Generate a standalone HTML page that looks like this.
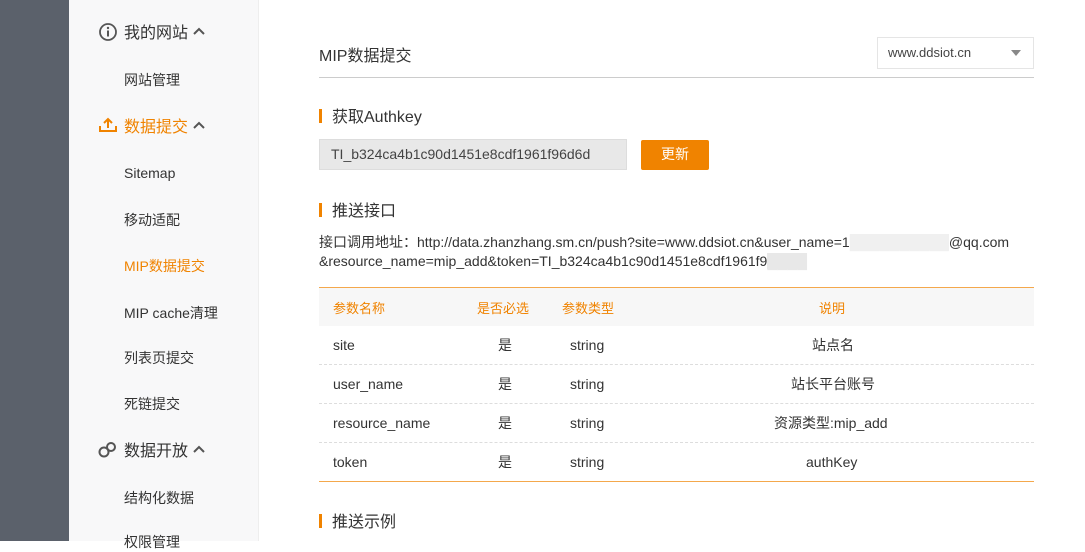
<!DOCTYPE html>
<html><head><meta charset="utf-8"><style>
*{margin:0;padding:0;box-sizing:border-box}
body{width:1085px;height:541px;overflow:hidden;background:#fff;font-family:"Liberation Sans","Noto Sans CJK SC",sans-serif;color:#333;position:relative}
.dark{position:absolute;left:0;top:0;width:69px;height:541px;background:#5b616b}
.side{position:absolute;left:69px;top:0;width:190px;height:541px;background:#f8f8f9;border-right:1px solid #eee}
.t{position:absolute;white-space:nowrap}
.s{font-size:14px;color:#333;left:124px}
.g{font-size:16px;color:#333}
.o{color:#f08300}
.abs{position:absolute}
.bar{position:absolute;left:319px;width:3px;height:14px;background:#f08300}
</style></head><body>
<div class="dark"></div>
<div class="side"></div>
<svg class="abs" style="left:98px;top:22px" width="20" height="20" viewBox="0 0 20 20"><circle cx="10" cy="10" r="8" fill="none" stroke="#555" stroke-width="1.8"/><circle cx="10" cy="6" r="1.2" fill="#555"/><rect x="9" y="8.5" width="2" height="6" fill="#555"/></svg>
<div class="t g" style="left:124px;top:19px">我的网站</div>
<svg class="abs" style="left:192px;top:26px" width="14" height="10"><path d="M2 8 L7 3 L12 8" fill="none" stroke="#555" stroke-width="2"/></svg>
<div class="t s" style="top:70px">网站管理</div>
<svg class="abs" style="left:99px;top:117px" width="18" height="16"><path d="M9 11V2 M5 6L9 2L13 6" fill="none" stroke="#f08300" stroke-width="2"/><path d="M1 9V14H17V9" fill="none" stroke="#f08300" stroke-width="2"/></svg>
<div class="t g o" style="left:124px;top:113px">数据提交</div>
<svg class="abs" style="left:192px;top:120px" width="14" height="10"><path d="M2 8 L7 3 L12 8" fill="none" stroke="#555" stroke-width="2"/></svg>
<div class="t s" style="top:165px">Sitemap</div>
<div class="t s" style="top:210px">移动适配</div>
<div class="t s o" style="top:256px;color:#f08300">MIP数据提交</div>
<div class="t s" style="top:303px">MIP cache清理</div>
<div class="t s" style="top:348px">列表页提交</div>
<div class="t s" style="top:394px">死链提交</div>
<svg class="abs" style="left:98px;top:441px" width="20" height="18"><circle cx="6" cy="11" r="4.5" fill="none" stroke="#555" stroke-width="2"/><circle cx="13" cy="6" r="4" fill="none" stroke="#555" stroke-width="2"/></svg>
<div class="t g" style="left:124px;top:437px">数据开放</div>
<svg class="abs" style="left:192px;top:444px" width="14" height="10"><path d="M2 8 L7 3 L12 8" fill="none" stroke="#555" stroke-width="2"/></svg>
<div class="t s" style="top:488px">结构化数据</div>
<div class="t s" style="top:532px">权限管理</div>

<div class="t" style="left:319px;top:42px;font-size:16px;color:#333">MIP数据提交</div>
<div class="abs" style="left:877px;top:37px;width:157px;height:32px;border:1px solid #e5e5e5;background:#fff"></div>
<div class="t" style="left:888px;top:45px;font-size:13px;color:#444">www.ddsiot.cn</div>
<svg class="abs" style="left:1010px;top:49px" width="12" height="8"><path d="M1 1H11L6 7Z" fill="#888"/></svg>
<div class="abs" style="left:319px;top:77px;width:715px;height:1px;background:#ccc"></div>

<div class="bar" style="top:109px"></div>
<div class="t" style="left:332px;top:103px;font-size:16px">获取Authkey</div>
<div class="abs" style="left:319px;top:139px;width:308px;height:31px;background:#e8e8e8;border:1px solid #ddd"></div>
<div class="t" style="left:331px;top:146px;font-size:14px;color:#444">TI_b324ca4b1c90d1451e8cdf1961f96d6d</div>
<div class="abs" style="left:641px;top:140px;width:68px;height:30px;background:#f08300;border-radius:2px;color:#fff;font-size:14px;text-align:center;line-height:28px">更新</div>

<div class="bar" style="top:203px"></div>
<div class="t" style="left:332px;top:197px;font-size:16px">推送接口</div>
<div class="t" style="left:319px;top:232px;font-size:14px">接口调用地址：http://data.zhanzhang.sm.cn/push?site=www.ddsiot.cn&amp;user_name=1<span style="color:#f0f0f0;background:#f0f0f0">██████████</span>@qq.com</div>
<div class="t" style="left:319px;top:253px;font-size:14px">&amp;resource_name=mip_add&amp;token=TI_b324ca4b1c90d1451e8cdf1961f9<span style="color:#e8e8e8;background:#e8e8e8">████</span></div>

<div class="abs" style="left:319px;top:287px;width:715px;height:1px;background:#f08300;opacity:.7"></div>
<div class="abs" style="left:319px;top:288px;width:715px;height:38px;background:#f7f7f7"></div>
<div class="t o" style="left:333px;top:298px;font-size:13px">参数名称</div>
<div class="t o" style="left:477px;top:298px;font-size:13px">是否必选</div>
<div class="t o" style="left:562px;top:298px;font-size:13px">参数类型</div>
<div class="t o" style="left:819px;top:298px;font-size:13px">说明</div>

<div class="t" style="left:333px;top:337px;font-size:14px">site</div><div class="t" style="left:498px;top:335px;font-size:14px">是</div><div class="t" style="left:570px;top:337px;font-size:14px">string</div><div class="t" style="left:812px;top:335px;font-size:14px">站点名</div>
<div class="abs" style="left:319px;top:364px;width:715px;border-top:1px dashed #ddd"></div>
<div class="t" style="left:333px;top:376px;font-size:14px">user_name</div><div class="t" style="left:498px;top:374px;font-size:14px">是</div><div class="t" style="left:570px;top:376px;font-size:14px">string</div><div class="t" style="left:791px;top:374px;font-size:14px">站长平台账号</div>
<div class="abs" style="left:319px;top:403px;width:715px;border-top:1px dashed #ddd"></div>
<div class="t" style="left:333px;top:415px;font-size:14px">resource_name</div><div class="t" style="left:498px;top:413px;font-size:14px">是</div><div class="t" style="left:570px;top:415px;font-size:14px">string</div><div class="t" style="left:774px;top:413px;font-size:14px">资源类型:mip_add</div>
<div class="abs" style="left:319px;top:442px;width:715px;border-top:1px dashed #ddd"></div>
<div class="t" style="left:333px;top:454px;font-size:14px">token</div><div class="t" style="left:498px;top:452px;font-size:14px">是</div><div class="t" style="left:570px;top:454px;font-size:14px">string</div><div class="t" style="left:806px;top:454px;font-size:14px">authKey</div>
<div class="abs" style="left:319px;top:481px;width:715px;height:1px;background:#f08300;opacity:.7"></div>

<div class="bar" style="top:514px"></div>
<div class="t" style="left:332px;top:508px;font-size:16px">推送示例</div>
</body></html>
